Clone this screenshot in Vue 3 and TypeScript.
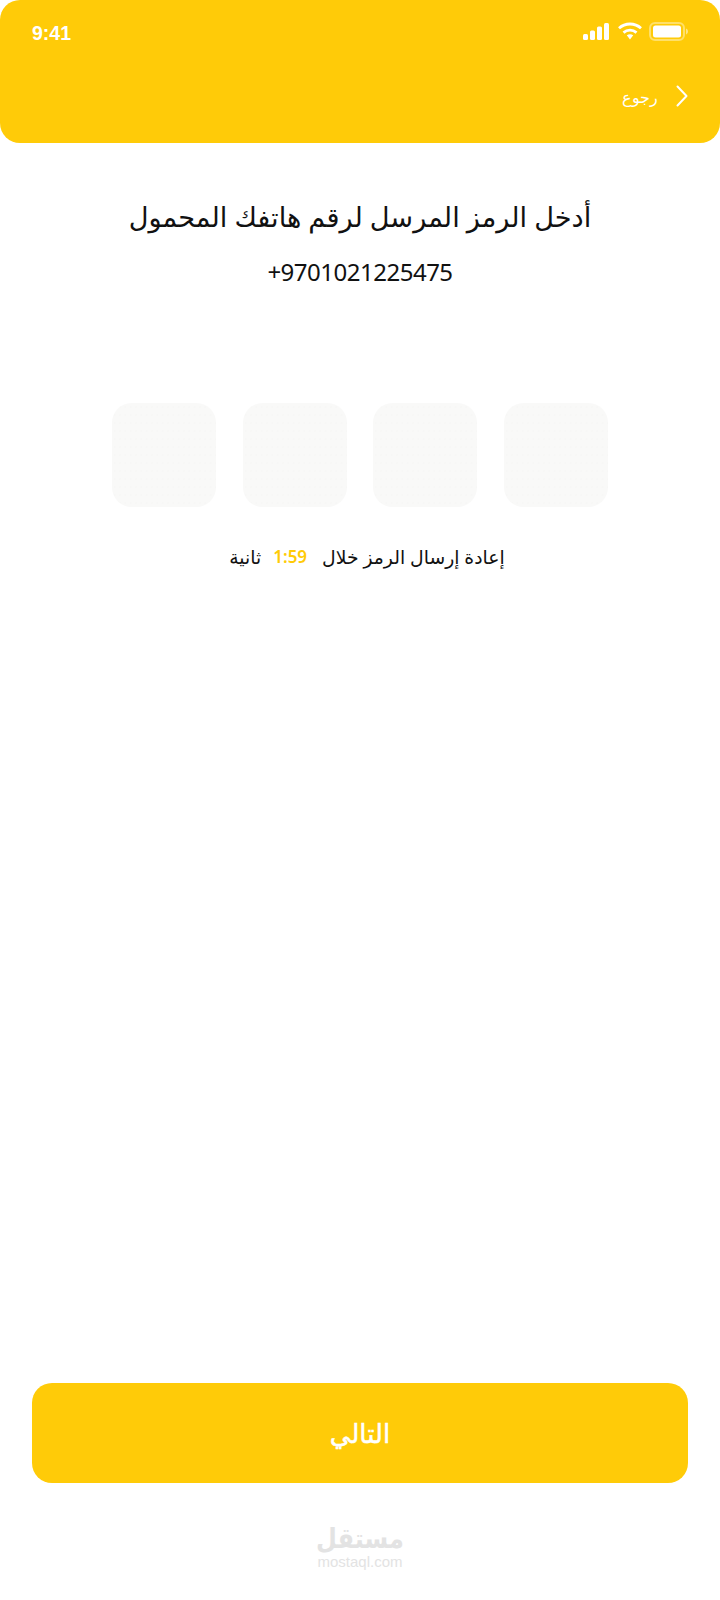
<script setup lang="ts">
const boxes: number[] = [1, 2, 3, 4]
</script>

<template>
  <main class="screen">
    <header class="top">
      <div class="status">
        <span class="time">9:41</span>
        <div class="status-icons">
          <svg class="signal" width="26" height="17" viewBox="0 0 26 17" fill="#fff">
            <rect x="0" y="11" width="5" height="6" rx="1.500" />
            <rect x="7" y="7.500" width="5" height="9.500" rx="1.500" />
            <rect x="14" y="3.500" width="5" height="13.500" rx="1.500" />
            <rect x="21" y="0" width="5" height="17" rx="1.500" />
          </svg>
          <svg class="wifi" width="24" height="18" viewBox="0 0 24 18" fill="none" stroke="#fff" stroke-width="2.800">
            <path d="M1 6.200C7.200 .6 16.800 .6 23 6.200" />
            <path d="M5.500 10.600C9.200 7.400 14.800 7.400 18.500 10.600" />
            <path d="M8.800 13.300 12 17.500l3.200-4.200c-1.900-1.300-4.500-1.300-6.400 0z" fill="#fff" stroke="none" />
          </svg>
          <svg width="39" height="19" viewBox="0 0 39 19" fill="none">
            <rect x="1" y="1" width="34" height="17" rx="5" stroke="#fff" stroke-opacity=".4" stroke-width="2" />
            <rect x="4" y="3.500" width="28" height="12" rx="2.500" fill="#fff" />
            <path d="M37 6.500c1.200.4 2 1.600 2 3s-.8 2.600-2 3z" fill="#fff" fill-opacity=".5" />
          </svg>
        </div>
      </div>
      <button class="back" type="button" dir="rtl">
        <svg width="12" height="22" viewBox="0 0 12 22" fill="none" stroke="#fff" stroke-width="2" stroke-linecap="round" stroke-linejoin="round">
          <path d="M1.500 1.500 10.500 11l-9 9.500" />
        </svg>
        <span class="back-label">رجوع</span>
      </button>
    </header>

    <section class="intro" dir="rtl">
      <h1>أدخل الرمز المرسل لرقم هاتفك المحمول</h1>
      <p dir="ltr">+9701021225475</p>
    </section>

    <div class="code">
      <div v-for="box in boxes" :key="box" class="cell"></div>
    </div>

    <p class="resend" dir="rtl">
      <span>إعادة إرسال الرمز خلال</span>
      <span class="count" dir="ltr">1:59</span>
      <span>ثانية</span>
    </p>

    <button class="next" type="button"><span>التالي</span></button>

    <footer class="mark">
      <strong>مستقل</strong>
      <small>mostaql.com</small>
    </footer>
  </main>
</template>

<style>
html,
body {
  margin: 0;
  background: #fff;
}
</style>

<style scoped>
.screen {
  width: 720px;
  height: 1600px;
  display: flex;
  flex-direction: column;
  align-items: center;
  background: #fff;
  font-family: "Noto Sans", "DejaVu Sans", sans-serif;
  color: #111;
  overflow: hidden;
}
.top {
  width: 100%;
  height: 143px;
  box-sizing: border-box;
  padding: 21px 32px 0;
  background: #ffcb08;
  border-radius: 20px;
  color: #fff;
}
.status {
  display: flex;
  justify-content: space-between;
  align-items: center;
  height: 24px;
}
.time {
  font: 700 19.500px/24px "Liberation Sans", sans-serif;
}
.status-icons {
  display: flex;
  align-items: center;
  margin-top: -4px;
}
.wifi {
  margin: 0 7px 0 9px;
}
.back {
  display: flex;
  align-items: center;
  gap: 18px;
  margin: 36px 0 0 auto;
  padding: 0;
  border: 0;
  background: none;
  color: #fff;
  font: 300 15.500px/26px "DejaVu Sans", sans-serif;
}
.back-label {
  margin-top: 4px;
}
.intro {
  margin-top: 47px;
  text-align: center;
}
.intro h1 {
  margin: 0;
  font-weight: 400;
  font-size: 27.200px;
  line-height: 54px;
}
.intro p {
  margin: 1px 0 0;
  font-size: 24px;
  letter-spacing: -0.500px;
  line-height: 54px;
}
.code {
  display: flex;
  gap: 26.670px;
  margin-top: 104px;
}
.cell {
  width: 104px;
  height: 104px;
  border-radius: 20px;
  background-color: #f9f9f8;
  background-image: radial-gradient(circle, #f6f6f4 0.5px, transparent 0.8px);
  background-size: 5.330px 8px;
}
.resend {
  display: flex;
  margin: 38px 0 0 14px;
  font-size: 18.800px;
  line-height: 24px;
}
.count {
  margin: 0 15px 0 12px;
  color: #ffcb08;
  font-size: 17px;
  font-weight: 600;
}
.next {
  width: 656px;
  height: 100px;
  margin-top: auto;
  padding: 2px 0 0;
  border: 0;
  border-radius: 20px;
  background: #ffcb08;
  color: #fff;
  font: 400 26px/1 "DejaVu Sans", sans-serif;
  -webkit-text-stroke: 0.500px #fff;
}
.mark {
  display: flex;
  flex-direction: column;
  align-items: center;
  margin: 41px 0 31px;
  color: #e3e3e3;
}
.mark strong {
  font: 700 24px/31px "DejaVu Sans", sans-serif;
  transform: scaleY(1.15);
}
.mark small {
  font: 400 15px/14px "Liberation Sans", sans-serif;
}
</style>
